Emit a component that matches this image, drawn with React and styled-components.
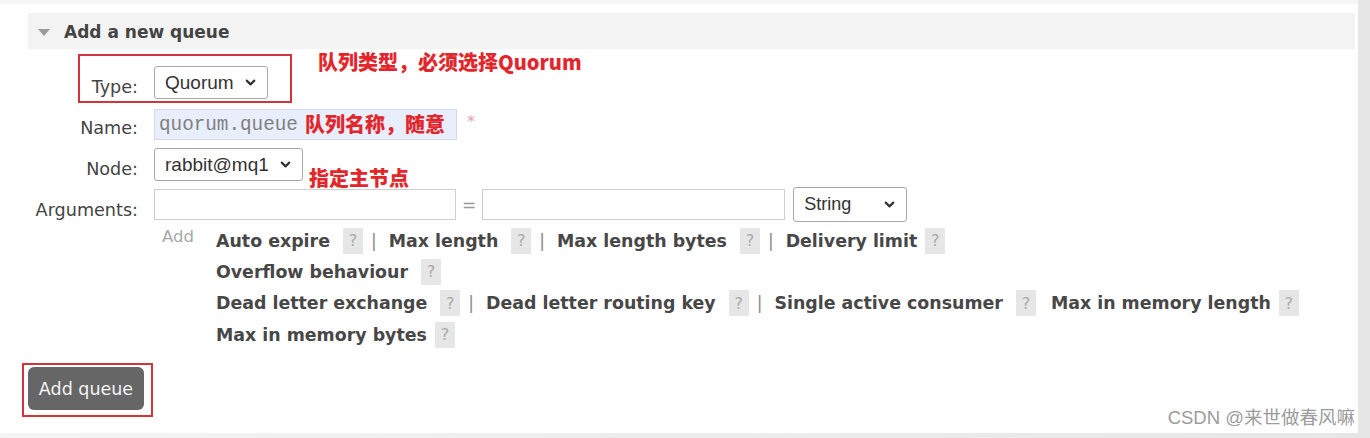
import React from 'react';
import styled, { createGlobalStyle } from 'styled-components';
import { ChevronDown } from 'lucide-react';

const GlobalStyle = createGlobalStyle`
  html, body {
    margin: 0;
    padding: 0;
    background: #ececec;
  }
  * {
    box-sizing: border-box;
  }
`;

const Page = styled.div`
  width: 1370px;
  height: 438px;
  background: linear-gradient(to right, #f4f4f4, #e6e6e6);
  position: relative;
  overflow: hidden;
`;

const Panel = styled.div`
  width: 1358px;
  height: 433px;
  background: #fff;
  border-top: 4px solid #f6f6f6;
  position: relative;
  font-family: "DejaVu Sans", Verdana, sans-serif;
  color: #444;
`;

const Header = styled.div`
  margin: 9px 3px 0 28px;
  height: 36px;
  background: #f3f3f3;
  display: flex;
  align-items: center;
  padding: 2px 0 0 10px;
  gap: 14px;
  font-size: 17px;
  font-weight: bold;
  color: #444;
`;

const Triangle = styled.span`
  width: 0;
  height: 0;
  border-left: 6px solid transparent;
  border-right: 6px solid transparent;
  border-top: 7px solid #9a9a9a;
`;

const Form = styled.div`
  position: relative;
  display: grid;
  grid-template-columns: 138px 1fr;
  grid-template-rows: 43px 39px 39px auto;
  column-gap: 16px;
  margin-top: 17px;
`;

const Label = styled.div`
  text-align: right;
  font-size: 17.6px;
  line-height: 20px;
  padding-top: ${p => p.$pad || 11}px;
  color: #444;
`;

const Field = styled.div`
  position: relative;
  display: flex;
  flex-direction: column;
  align-items: flex-start;
`;

const InlineRow = styled.div`
  display: flex;
  align-items: center;
`;

const Select = styled.div`
  width: ${p => p.$w}px;
  height: ${p => p.$h || 33}px;
  margin-left: ${p => p.$ml || 0}px;
  align-self: flex-start;
  border: 1px solid #a9a9a9;
  border-radius: 3px;
  background: #fff;
  display: flex;
  align-items: center;
  justify-content: space-between;
  padding: 0 9px 0 10px;
  font-family: "Liberation Sans", Arial, sans-serif;
  font-size: ${p => p.$fs || 19}px;
  color: #333;
`;

const TextInput = styled.div`
  width: ${p => p.$w}px;
  height: 31px;
  border: 1px solid ${p => (p.$filled ? '#d3dbe9' : '#cfcfcf')};
  background: ${p => (p.$filled ? '#e8eefb' : '#fff')};
  display: flex;
  align-items: center;
  padding-left: 4px;
  font-family: "Liberation Mono", "Courier New", monospace;
  font-size: 19.3px;
  color: #808080;
`;

const Required = styled.span`
  margin-left: 10px;
  color: #eba3a3;
  font-size: 16px;
  margin-top: -6px;
`;

const Equals = styled.span`
  margin: 0 6px 0 6px;
  color: #999;
  font-size: 17px;
`;

const Note = styled.div`
  position: absolute;
  left: ${p => p.$x}px;
  top: ${p => p.$y}px;
  white-space: nowrap;
  font-family: "Noto Sans CJK SC", "Liberation Sans", sans-serif;
  font-weight: 900;
  font-size: 20px;
  line-height: 24px;
  color: #e3262b;
`;

const MarkBox = styled.div`
  position: absolute;
  left: ${p => p.$x}px;
  top: ${p => p.$y}px;
  width: ${p => p.$w}px;
  height: ${p => p.$h}px;
  border: 2px solid #d2343b;
  pointer-events: none;
`;

const Options = styled.div`
  display: flex;
  margin-top: 3px;
`;

const AddLink = styled.div`
  width: 62px;
  padding-left: 8px;
  color: #a8a8a8;
  font-size: 16.5px;
  line-height: 24px;
`;

const Lines = styled.div`
  display: flex;
  flex-direction: column;
`;

const OptLine = styled.div`
  display: flex;
  align-items: center;
  height: 31.3px;
  white-space: nowrap;
`;

const OptName = styled.span`
  font-weight: bold;
  font-size: 17.4px;
  color: #474747;
`;

const Help = styled.span`
  display: inline-flex;
  align-items: center;
  justify-content: center;
  width: 20px;
  height: 26px;
  margin-left: ${p => (p.$tight ? 8 : 13)}px;
  background: #e6e6e6;
  color: #a9a9a9;
  font-size: 16px;
`;

const Sep = styled.span`
  margin: 0 12px 0 8px;
  color: #8a8a8a;
  font-size: 17px;
`;

const Gap = styled.span`
  width: 15px;
`;

const ButtonMark = styled.div`
  display: inline-block;
  margin: 13px 0 0 22px;
  border: 2px solid #d2343b;
  padding: 2px 7px 5px 4px;
`;

const Button = styled.div`
  width: 116px;
  height: 43px;
  border-radius: 6px;
  background: #666;
  color: #f4f4f4;
  font-size: 17.5px;
  display: flex;
  align-items: center;
  justify-content: center;
`;

const Watermark = styled.div`
  position: absolute;
  right: 3px;
  bottom: 4px;
  font-family: "Liberation Sans", "Noto Sans CJK SC", sans-serif;
  font-size: 18.5px;
  color: #9c9c9c;
  text-shadow: 0 0 1px #fff;
`;

const optionLines = [
  [
    { name: 'Auto expire' },
    { name: 'Max length' },
    { name: 'Max length bytes' },
    { name: 'Delivery limit', tight: true, last: true },
  ],
  [{ name: 'Overflow behaviour', last: true }],
  [
    { name: 'Dead letter exchange' },
    { name: 'Dead letter routing key' },
    { name: 'Single active consumer', noSep: true },
    { name: 'Max in memory length', tight: true, last: true },
  ],
  [{ name: 'Max in memory bytes', tight: true, last: true }],
];

const Chevron = () => <ChevronDown size={15} strokeWidth={3.4} color="#333" />;

export default function App() {
  return (
    <>
      <GlobalStyle />
      <Page>
        <Panel>
          <Header>
            <Triangle />
            Add a new queue
          </Header>

          <Form>
            <MarkBox $x={78} $y={-12} $w={214} $h={49} />

            <Label>Type:</Label>
            <Field>
              <Select $w={114}>
                Quorum
                <Chevron />
              </Select>
              <Note $x={164} $y={-16}>队列类型，必须选择Quorum</Note>
            </Field>

            <Label $pad={9}>Name:</Label>
            <Field>
              <InlineRow>
                <TextInput $w={303} $filled>quorum.queue</TextInput>
                <Required>*</Required>
              </InlineRow>
              <Note $x={151} $y={3}>队列名称，随意</Note>
            </Field>

            <Label $pad={11}>Node:</Label>
            <Field>
              <Select $w={149}>
                rabbit@mq1
                <Chevron />
              </Select>
              <Note $x={155} $y={18}>指定主节点</Note>
            </Field>

            <Label $pad={13}>Arguments:</Label>
            <Field>
              <InlineRow>
                <TextInput $w={302} />
                <Equals>=</Equals>
                <TextInput $w={303} />
                <Select $w={114} $h={35} $fs={18} $ml={8}>
                  String
                  <Chevron />
                </Select>
              </InlineRow>
              <Options>
                <AddLink>Add</AddLink>
                <Lines>
                  {optionLines.map((line, i) => (
                    <OptLine key={i}>
                      {line.map(opt => (
                        <React.Fragment key={opt.name}>
                          <OptName>{opt.name}</OptName>
                          <Help $tight={opt.tight}>?</Help>
                          {!opt.last && !opt.noSep && <Sep>|</Sep>}
                          {opt.noSep && <Gap />}
                        </React.Fragment>
                      ))}
                    </OptLine>
                  ))}
                </Lines>
              </Options>
            </Field>
          </Form>

          <ButtonMark>
            <Button>Add queue</Button>
          </ButtonMark>

          <Watermark>CSDN @来世做春风嘛</Watermark>
        </Panel>
      </Page>
    </>
  );
}
